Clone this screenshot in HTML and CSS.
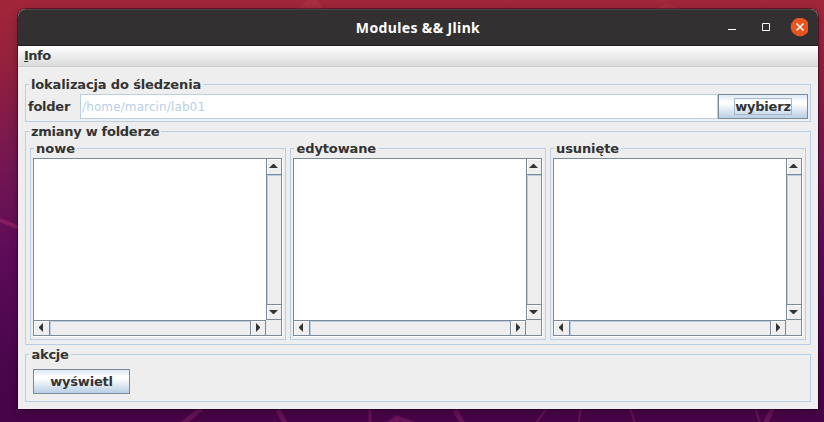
FILE: index.html
```html
<!DOCTYPE html>
<html lang="pl">
<head>
<meta charset="utf-8">
<title>Modules &amp;&amp; Jlink</title>
<link rel="stylesheet" href="styles.css">
</head>
<body>
<svg class="wallpaper" width="824" height="422" viewBox="0 0 824 422">
  <g fill="none" stroke="#7b1d63" stroke-opacity=".6">
    <path d="M0 220L20 228" stroke="#a02466" stroke-width="4"/>
    <path d="M180 426L202 408M278 410L292 436M455 410L470 436M372 434L397 418L442 434" stroke-width="5"/>
    <path d="M370 408V434M397 418L399 434" stroke-width="3"/>
    <path d="M547 408L534 426M581 408L578 426M630 408L636 426M755 408L761 426" stroke-width="2"/>
    <path d="M773 408L764 426" stroke-width="5"/>
  </g>
  <g fill="#b43a4a" fill-opacity=".4">
    <path d="M292 14L308 0H318L325 14zM652 10L666 4L690 12z"/>
  </g>
</svg>
<main class="window">
  <header class="titlebar">
    <h1>Modules &amp;&amp; Jlink</h1>
    <div class="controls">
      <svg width="84" height="20" viewBox="0 0 84 20">
        <path d="M4 11.500H12" stroke="#fff"/>
        <path d="M38.500 5.500h7v7h-7z" fill="none" stroke="#fff"/>
        <circle cx="76" cy="9" r="9.300" fill="#e95420"/>
        <path d="M72.500 5.500l7 7M79.500 5.500l-7 7" stroke="#fff" stroke-width="1.500"/>
      </svg>
    </div>
  </header>
  <nav class="menubar"><span class="menu"><u>I</u>nfo</span></nav>
  <div class="content">
    <section class="group location">
      <h2 class="t-location">lokalizacja do śledzenia</h2>
      <div class="row">
        <label>folder</label>
        <div class="field">/home/marcin/lab01</div>
        <button class="button choose"><span>wybierz</span></button>
      </div>
    </section>
    <section class="group changes">
      <h2 class="t-changes">zmiany w folderze</h2>
      <div class="columns">
        <section class="group list">
          <h2 class="t-new">nowe</h2>
          <div class="pane">
            <div class="view"></div>
            <div class="vbar"><i class="arrow up"><svg width="13" height="15"><path d="M2 9h9L7 5H6z"/></svg></i><i class="track"></i><i class="arrow down"><svg width="13" height="14"><path d="M2 5h9L7 9H6z"/></svg></i></div>
            <div class="hbar"><i class="arrow left"><svg width="15" height="13"><path d="M9 2v9L5 7V6z"/></svg></i><i class="track"></i><i class="arrow right"><svg width="14" height="13"><path d="M5 2v9L9 7V6z"/></svg></i></div>
          </div>
        </section>
        <section class="group list">
          <h2 class="t-edited">edytowane</h2>
          <div class="pane">
            <div class="view"></div>
            <div class="vbar"><i class="arrow up"><svg width="13" height="15"><path d="M2 9h9L7 5H6z"/></svg></i><i class="track"></i><i class="arrow down"><svg width="13" height="14"><path d="M2 5h9L7 9H6z"/></svg></i></div>
            <div class="hbar"><i class="arrow left"><svg width="15" height="13"><path d="M9 2v9L5 7V6z"/></svg></i><i class="track"></i><i class="arrow right"><svg width="14" height="13"><path d="M5 2v9L9 7V6z"/></svg></i></div>
          </div>
        </section>
        <section class="group list">
          <h2 class="t-removed">usunięte</h2>
          <div class="pane">
            <div class="view"></div>
            <div class="vbar"><i class="arrow up"><svg width="13" height="15"><path d="M2 9h9L7 5H6z"/></svg></i><i class="track"></i><i class="arrow down"><svg width="13" height="14"><path d="M2 5h9L7 9H6z"/></svg></i></div>
            <div class="hbar"><i class="arrow left"><svg width="15" height="13"><path d="M9 2v9L5 7V6z"/></svg></i><i class="track"></i><i class="arrow right"><svg width="14" height="13"><path d="M5 2v9L9 7V6z"/></svg></i></div>
          </div>
        </section>
      </div>
    </section>
    <section class="group actions">
      <h2 class="t-actions">akcje</h2>
      <button class="button show"><span>wyświetl</span></button>
    </section>
  </div>
</main>
</body>
</html>
```
FILE: styles.css
```css
* { box-sizing: border-box; }
body {
  margin: 0;
  width: 824px;
  height: 422px;
  overflow: hidden;
  padding: 9px 6px 13px 18px;
  background: linear-gradient(180deg, #a22639 0%, #94213c 14%, #761751 37%, #5d0b58 60%, #4b064c 85%, #470447 100%);
  font: bold 13px/17px "DejaVu Sans", sans-serif;
  color: #333;
}
.wallpaper { position: absolute; left: 0; top: 0; }
.window {
  position: relative;
  width: 800px;
  height: 400px;
  background: #eee;
  border-radius: 8px 8px 0 0;
  box-shadow: 0 0 0 1px rgba(30,0,20,.45), 0 2px 9px rgba(0,0,0,.3);
}
.titlebar {
  height: 37px;
  display: grid;
  align-items: center;
  background: #333031;
  border-radius: 8px 8px 0 0;
  border-top: 1px solid #494546;
  border-bottom: 1px solid #1e1c1d;
}
.titlebar h1 {
  grid-area: 1 / 1;
  justify-self: center;
  margin: 0;
  color: #fff;
  font: bold 14px/20px "Noto Sans", sans-serif;
  letter-spacing: .36px;
}
.controls { grid-area: 1 / 1; justify-self: end; width: 94px; height: 20px; }
.controls svg, .arrow svg { display: block; }
.menubar {
  height: 21px;
  padding: 1px 6px;
  background: linear-gradient(#fff, #dadada);
  border-bottom: 1px solid #ccc;
}
.menu { letter-spacing: -.5px; }
.content { padding: 17px 7px 7px; display: flex; flex-direction: column; gap: 9px; }
.group { border: 1px solid #b8cfe5; }
h2 {
  width: fit-content;
  height: 17px;
  margin: -9px 0 0 3px;
  padding: 0 2px;
  font: inherit;
  white-space: nowrap;
  background: #eee;
}
.t-location { letter-spacing: -.14px; }
.t-changes { letter-spacing: -.28px; }
.t-edited { padding-left: 2.500px; letter-spacing: -.12px; }
.t-removed { letter-spacing: -.1px; }
.t-actions { letter-spacing: -.25px; padding-left: 2.500px; }
.location { height: 38px; }
.row { display: flex; align-items: center; padding: 1px 2px 0 1px; }
.row label { width: 53px; padding-left: 1px; letter-spacing: -.25px; }
.field {
  flex: 1;
  height: 25px;
  padding: 4px 1px 2px;
  border: 1px solid #b8cfe5;
  background: #fff;
  color: #b8cfe5;
  font-weight: normal;
  font-size: 12px;
  letter-spacing: .12px;
}
.button {
  display: flex;
  align-items: center;
  justify-content: center;
  height: 25px;
  padding: 0;
  border: 1px solid #7a8a99;
  border-radius: 0;
  background: linear-gradient(#dde8f3 0%, #fff 30%, #fff 36%, #b8cfe5 100%);
  font: inherit;
  color: #333;
}
.choose { width: 90px; letter-spacing: -.2px; }
.choose span { width: 58px; height: 17px; line-height: 15px; border: 1px solid #a3b8cc; display: flex; justify-content: center; }
.changes { height: 214px; }
.columns { display: flex; gap: 4px; padding: 8px 4px 0; }
.list { width: 256px; height: 192px; }
.list h2 { margin-left: 3px; }
.pane {
  display: grid;
  grid-template: 161px 15px / 232px 15px;
  width: 249px;
  height: 178px;
  margin: 1px 0 0 2px;
  border: 1px solid #7a8a99;
  box-shadow: 1px 1px #fff;
}
.view { background: #fff; }
.vbar { display: flex; flex-direction: column; border-left: 1px solid #7a8a99; border-bottom: 1px solid #7a8a99; }
.hbar { display: flex; border-top: 1px solid #7a8a99; border-right: 1px solid #7a8a99; }
.arrow { flex: none; box-shadow: inset 1px 1px #fff; }
.arrow path { fill: #333; }
.track { flex: 1; box-shadow: inset 1px 1px #b8cfe5; }
.up { height: 16px; border-bottom: 1px solid #7a8a99; }
.down { height: 15px; border-top: 1px solid #7a8a99; }
.left { width: 16px; border-right: 1px solid #7a8a99; }
.right { width: 15px; border-left: 1px solid #7a8a99; }
.actions { height: 48px; }
.show { width: 97px; margin: 6px 0 0 7px; letter-spacing: -.2px; }
```
